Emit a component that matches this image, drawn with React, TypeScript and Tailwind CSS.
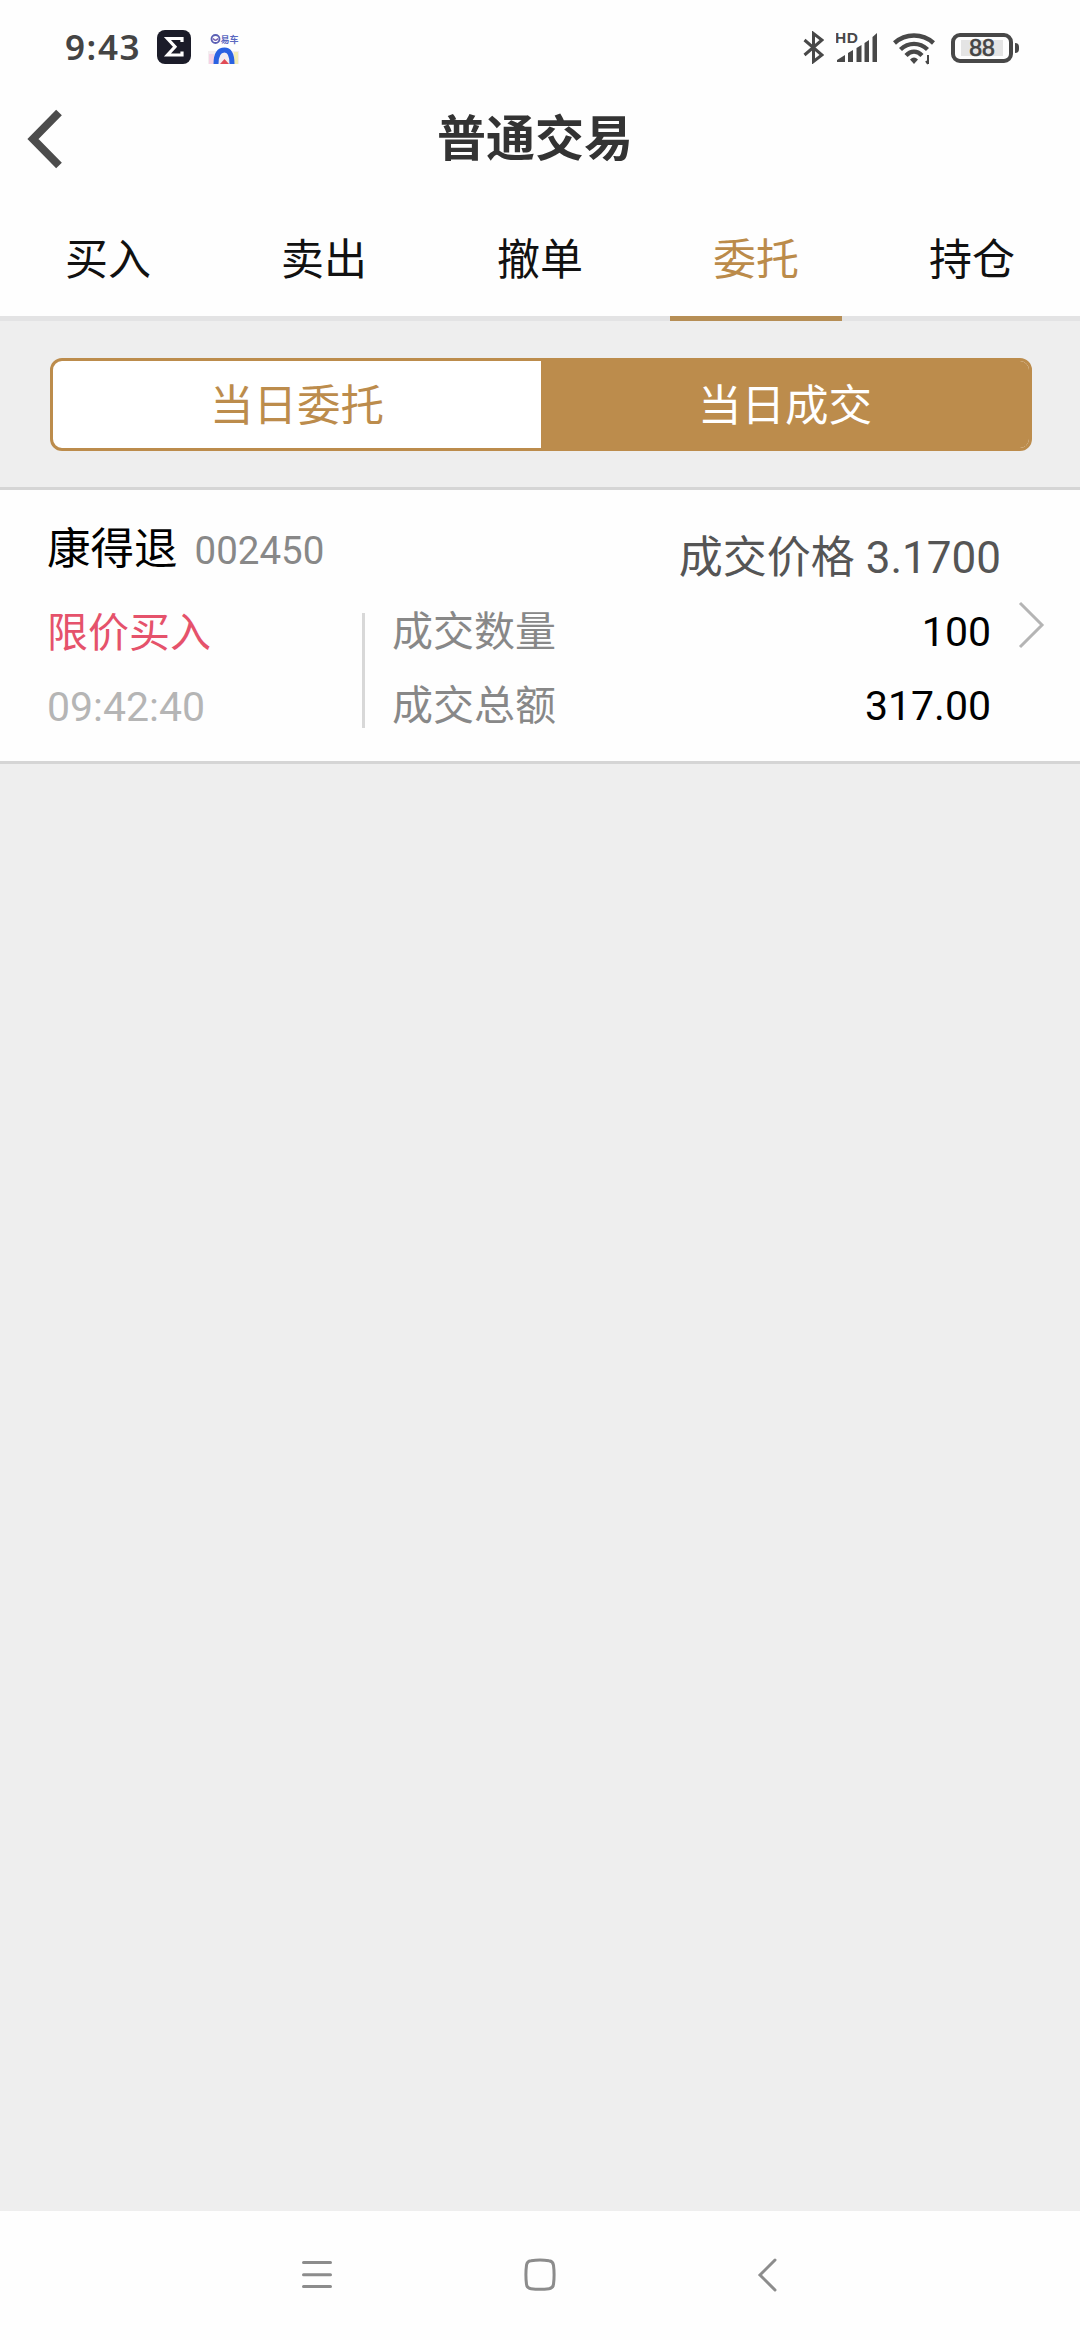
import type { ReactNode } from "react";

const tabs = ["买入", "卖出", "撤单", "委托", "持仓"];

function Line({ children, className }: { children: ReactNode; className: string }) {
  return <div className={`whitespace-nowrap ${className}`}>{children}</div>;
}

function StatusBar() {
  return (
    <div className="flex h-[94px] items-start bg-[#fefefe] text-[#444]">
      <div className="ml-[65px] mt-[26px] w-[92px] font-['Noto_Sans'] text-[35px] font-semibold leading-[42px] tracking-[1.6px]">9:43</div>
      <svg className="mt-[30px] h-[34px] w-[34px]" viewBox="0 0 34 34">
        <rect width="34" height="34" rx="8" fill="#1b1c29" />
        <path d="M25 12V8.5H10.5l7.5 8.2-7.5 8.3H25v-3.5" fill="none" stroke="#fff" strokeWidth="3.2" />
      </svg>
      <svg className="ml-[17px] mt-[34px] h-[30px] w-[31px]" viewBox="0 0 31 30">
        <rect y="17" width="31" height="13" fill="#f3eef0" />
        <rect x="1" y="20" width="5" height="10" fill="#f6d3e4" />
        <rect x="26" y="18" width="4" height="12" fill="#f3edb4" />
        <circle cx="7.5" cy="5" r="4" fill="none" stroke="#5b60b4" strokeWidth="1.8" />
        <path d="M5 4.500q2.500 3.500 5 0" fill="none" stroke="#7a62b4" strokeWidth="1.4" />
        <text x="12.500" y="8.700" fontSize="9" fontWeight="700" fill="#5a68c0" fontFamily="Noto Sans CJK SC, sans-serif">易车</text>
        <path d="M8 30c0-9 3-14 8.500-14S24 21 24 30" fill="none" stroke="#2a62e2" strokeWidth="5" />
        <path d="M12 30l4.500-5 4.500 5z" fill="#e04a55" />
      </svg>
      <svg className="ml-[564px] mt-[31px] h-[33px] w-[21px]" viewBox="0 0 21 33" fill="none" stroke="#484848" strokeWidth="3">
        <path d="M1.500 9l17.500 15-8.500 6.500V2.500L19 9 1.500 24" />
      </svg>
      <svg className="ml-[12px] mt-[30px] h-[34px] w-[44px]" viewBox="0 0 44 34" fill="#484848">
        <text x="-1" y="13" fontSize="15.500" fontWeight="700" fontFamily="Liberation Sans, sans-serif" textLength="23">HD</text>
        <path d="M1 32v-2l8-5v7zM12 32v-9l5-3v12zM20.500 32V18l5-3v17zM28.500 32V13l4.500-3v22zM36.500 32V7l4.500-4v29z" />
      </svg>
      <svg className="ml-[13px] mt-[32px] h-[33px] w-[43px]" viewBox="0 0 43 33" fill="none" stroke="#484848" strokeWidth="4.4">
        <path d="M1.500 11c11-10 28-10 39 0M7.500 17.500c8-7.500 19-7.500 27 0M13 23.500c5-5 11-5 16 0" />
        <path d="M17 27.500q4-4 8 0l-4 4.500z" fill="#484848" stroke="none" />
        <path d="M35 23v9M33 29l2 3" strokeWidth="2" />
      </svg>
      <div className="ml-[15px] mt-[33px] flex h-[30px] w-[62px] items-center justify-center rounded-[9px] border-4 border-[#484848]">
        <div className="flex h-4 w-[42px] items-center justify-center bg-[#e4e4e4] font-['Liberation_Sans'] text-[23px] font-medium leading-none [-webkit-text-stroke:0.7px_#444]">88</div>
      </div>
      <div className="ml-0.5 mt-[43px] h-[10px] w-1 rounded-r-sm bg-[#484848]" />
    </div>
  );
}

function Header() {
  return (
    <div className="flex h-[96px] items-start bg-[#fefefe]">
      <svg className="ml-[26px] mt-[15px] h-[60px] w-[38px]" viewBox="0 0 38 60">
        <path d="M33 3.500L7 30l26 26.500" fill="none" stroke="#4c4c4c" strokeWidth="8" />
      </svg>
      <Line className="ml-[373px] mt-[10px] text-[49px] font-bold leading-[72px] text-[#333]">普通交易</Line>
    </div>
  );
}

function Tabs() {
  return (
    <div className="grid h-[131px] grid-cols-5 border-b-[5px] border-[#e3e3e4] bg-[#fefefe]">
      {tabs.map((t) => (
        <div key={t} className="relative pt-[39px] text-center">
          <Line className={`text-[43px] leading-[62px] ${t === "委托" ? "text-[#bb8b4a]" : "text-[#111]"}`}>{t}</Line>
          {t === "委托" && <div className="absolute -bottom-[5px] left-[22px] h-[5px] w-[172px] bg-[#b68e55]" />}
        </div>
      ))}
    </div>
  );
}

function Segments() {
  return (
    <div className="h-[169px] border-b-[3px] border-[#d5d5d5] pl-[50px] pr-[48px] pt-[37px]">
      <div className="grid h-[93px] grid-cols-2 overflow-hidden rounded-xl border-[3px] border-[#bc8c4c] bg-white text-center text-[43.500px] leading-[91px]">
        <div className="text-[#bc8c4c]">当日委托</div>
        <div className="bg-[#bc8c4c] text-white">当日成交</div>
      </div>
    </div>
  );
}

function Trade() {
  return (
    <div className="flex h-[274px] border-b-[3px] border-[#d5d5d5] bg-[#fefefe]">
      <div className="w-[362px] pl-[47px] pt-[29px]">
        <div className="flex items-baseline whitespace-nowrap leading-[62px]">
          <span className="text-[43.500px] text-black">康得退</span>
          <span className="ml-[17px] text-[38.500px] text-[#888]">002450</span>
        </div>
        <Line className="mt-[20px] text-[41px] leading-[62px] text-[#e5526b]">限价买入</Line>
        <Line className="mt-[12px] text-[41px] leading-[62px] text-[#b5b5b5]">09:42:40</Line>
      </div>
      <div className="mt-[123px] h-[115px] w-[3px] bg-[#d8d8d8]" />
      <div className="w-[636px] pl-[27px] pt-[37px]">
        <Line className="text-right text-[44px] leading-[62px] text-[#555]">成交价格 3.1700</Line>
        <div className="mt-[12px] flex justify-between pr-[10px] text-[41px] leading-[62px]">
          <span className="text-[#888]">成交数量</span>
          <span className="text-black">100</span>
        </div>
        <div className="mt-[12px] flex justify-between pr-[10px] text-[41px] leading-[62px]">
          <span className="text-[#888]">成交总额</span>
          <span className="text-black">317.00</span>
        </div>
      </div>
      <svg className="ml-[17px] mt-[111px] h-[48px] w-[28px]" viewBox="0 0 28 48">
        <path d="M2 2l22 22L2 46" fill="none" stroke="#b4b4b4" strokeWidth="3" />
      </svg>
    </div>
  );
}

function NavBar() {
  return (
    <div className="flex h-[129px] items-start bg-[#fefefe] pt-[46px]">
      <svg className="ml-[301px] h-[36px] w-[32px]" viewBox="0 0 32 36" stroke="#8c8c8c" strokeWidth="3" strokeLinecap="round">
        <path d="M2.500 5.500h27M2.500 17.700h27M2.500 29.500h27" />
      </svg>
      <svg className="ml-[190px] h-[36px] w-[34px]" viewBox="0 0 34 36" fill="none" stroke="#8c8c8c" strokeWidth="3">
        <path d="M8 3.700q9-1.400 18 0q4 .500 4.500 4.500q1.200 9.500 0 19q-.500 4-4.500 4.500q-9 1.200-18 0q-4-.500-4.500-4.500q-1.200-9.500 0-19q.500-4 4.500-4.500z" />
      </svg>
      <svg className="ml-[200px] h-[36px] w-[22px]" viewBox="0 0 22 36" fill="none" stroke="#8c8c8c" strokeWidth="3" strokeLinecap="round">
        <path d="M18 3L3 18l15 15" />
      </svg>
    </div>
  );
}

export default function App() {
  return (
    <div className="flex h-[2340px] w-[1080px] flex-col bg-[#eee] font-['Roboto','Noto_Sans_CJK_SC',sans-serif]">
      <StatusBar />
      <Header />
      <Tabs />
      <Segments />
      <Trade />
      <div className="flex-1" />
      <NavBar />
    </div>
  );
}
